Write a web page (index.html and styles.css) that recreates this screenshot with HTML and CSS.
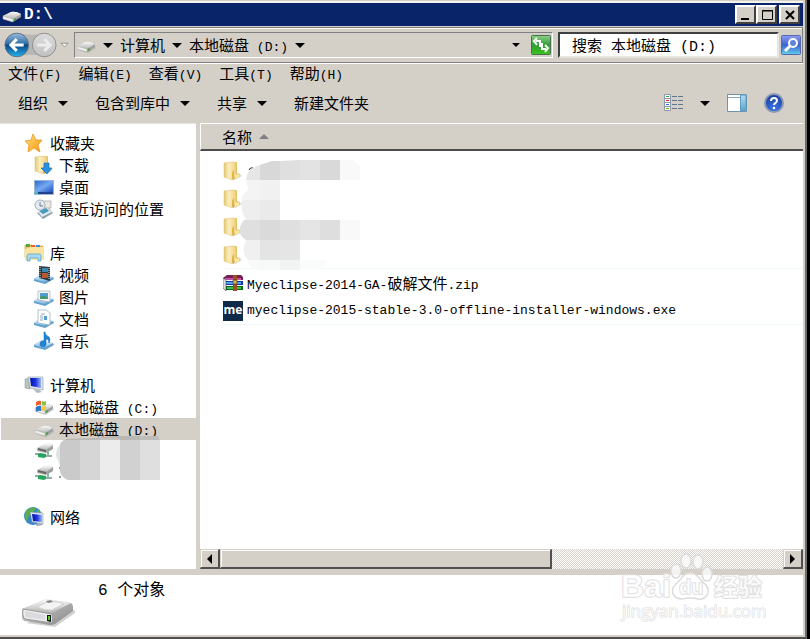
FILE: index.html
```html
<!DOCTYPE html>
<html lang="zh-CN">
<head>
<meta charset="utf-8">
<title>D:\</title>
<link rel="stylesheet" href="styles.css">
</head>
<body>
<svg class="sprite" width="0" height="0" aria-hidden="true">
  <defs>
    <linearGradient id="gMetal" x1="0" y1="0" x2="0" y2="1"><stop offset="0" stop-color="#fafafa"/><stop offset="1" stop-color="#b4b4b4"/></linearGradient>
    <linearGradient id="gSide" x1="0" y1="0" x2="1" y2="1"><stop offset="0" stop-color="#d8d8d8"/><stop offset="1" stop-color="#858585"/></linearGradient>
    <linearGradient id="gFolder" x1="0" y1="0" x2="1" y2="0"><stop offset="0" stop-color="#e3c878"/><stop offset=".4" stop-color="#fbeebc"/><stop offset="1" stop-color="#efd27c"/></linearGradient>
    <linearGradient id="gFlap" x1="0" y1="0" x2="1" y2="0"><stop offset="0" stop-color="#d9ac3c"/><stop offset="1" stop-color="#f3d880"/></linearGradient>
    <linearGradient id="gScreen" x1="0" y1="0" x2="1" y2="1"><stop offset="0" stop-color="#2e6ad0"/><stop offset=".5" stop-color="#74a8f0"/><stop offset="1" stop-color="#1f50bc"/></linearGradient>
    <linearGradient id="gMonitor" x1="0" y1="0" x2="1" y2="0"><stop offset="0" stop-color="#0412a8"/><stop offset=".5" stop-color="#1c34e0"/><stop offset="1" stop-color="#9cb4f8"/></linearGradient>
    <linearGradient id="gBack" x1="0" y1="0" x2="0" y2="1"><stop offset="0" stop-color="#9dbddb"/><stop offset=".45" stop-color="#2e6ea8"/><stop offset=".5" stop-color="#0c4584"/><stop offset="1" stop-color="#22b4f0"/></linearGradient>
    <linearGradient id="gFwd" x1="0" y1="0" x2="0" y2="1"><stop offset="0" stop-color="#dcdcdc"/><stop offset="1" stop-color="#c0c0c0"/></linearGradient>
    <linearGradient id="gGreen" x1="0" y1="0" x2="0" y2="1"><stop offset="0" stop-color="#8fd08a"/><stop offset=".5" stop-color="#2f9c35"/><stop offset="1" stop-color="#3cc41c"/></linearGradient>
    <linearGradient id="gFind" x1="0" y1="0" x2="0" y2="1"><stop offset="0" stop-color="#8e9cf0"/><stop offset=".5" stop-color="#3d62d0"/><stop offset="1" stop-color="#60d0f0"/></linearGradient>
    <radialGradient id="gHelp" cx=".5" cy=".8" r=".8"><stop offset="0" stop-color="#3c78e8"/><stop offset="1" stop-color="#183a9c"/></radialGradient>
    <linearGradient id="gStar" x1="0" y1="0" x2="1" y2="1"><stop offset="0" stop-color="#ffe878"/><stop offset="1" stop-color="#f89010"/></linearGradient>
    <linearGradient id="gTray" x1="0" y1="0" x2="0" y2="1"><stop offset="0" stop-color="#e8f6ff"/><stop offset="1" stop-color="#78b4e0"/></linearGradient>
    <linearGradient id="gPane" x1="0" y1="0" x2="0" y2="1"><stop offset="0" stop-color="#b4dcee"/><stop offset="1" stop-color="#5ca4cc"/></linearGradient>
  </defs>
  <symbol id="drive" viewBox="0 0 20 20">
    <path d="M2 15l10 3 8-5v-1l-8 4z" fill="#000" opacity=".15"/>
    <path d="M1 11L9 7q5-1 10 2v3l-8 5-10-3z" fill="url(#gSide)"/>
    <path d="M1 11L9 7q5-1 10 2l-8 5z" fill="url(#gMetal)"/>
    <path d="M1 11l10 3v3L1 14z" fill="#eee" stroke="#aaa" stroke-width=".5"/>
    <path d="M12 14v2l2-1v-2z" fill="#3aa436"/>
  </symbol>
  <symbol id="windrive" viewBox="0 0 20 20">
    <use href="#drive"/>
    <path d="M2 5q3-2 5-1v4q-2-1-5 1z" fill="#e8602c"/><path d="M8 4q2 1 4 0v4q-2 1-4 0z" fill="#8cc03c"/>
    <path d="M2 10q3-2 5-1v5q-2-1-5 1z" fill="#2c78c8"/><path d="M8 9q2 1 4 0v4q-2 1-4 0z" fill="#f8c830"/>
  </symbol>
  <symbol id="netdrive" viewBox="0 0 20 20">
    <path d="M3 7l8-4q5-1 8 1v4l-7 4-9-2z" fill="url(#gSide)"/>
    <path d="M3 7l8-4q5-1 8 1l-7 5z" fill="url(#gMetal)"/>
    <path d="M4 7l8 2v2L4 9z" fill="#666"/>
    <path d="M1 13h4l8 2h5" fill="none" stroke="#9aa" stroke-width="2"/>
    <path d="M4 13l2-1 6 1v3l-2 1-6-1z" fill="#21a65c"/><path d="M14 10v4" stroke="#8b9" stroke-width="2"/>
  </symbol>
  <symbol id="bigdrive" viewBox="0 0 56 30">
    <path d="M6 25l29 4 20-14v-3z" fill="#000" opacity=".18"/>
    <path d="M2 11L24 2q3-1 8 0l19 3q2 1 2 4v4L35 26q-2 1-5 1L5 23q-3-1-3-4z" fill="url(#gSide)"/>
    <path d="M2 11L24 2q3-1 8 0l19 3-19 10z" fill="url(#gMetal)"/>
    <path d="M17 9l10-5q5-1 11 0l6 2-12 6q-7 1-15-3z" fill="#f4f4f4" stroke="#d0d0d0"/>
    <path d="M26 3l5-1 2 2-5 1z" fill="#888"/>
    <path d="M3 11l29 5q1 5 0 9L5 21q-3-2-2-10z" fill="#ededed" stroke="#999"/>
    <path d="M5 13l20 4v5L5 19z" fill="#dcdce0"/>
    <path d="M27 17h4v7l-4-1z" fill="#111"/><path d="M28 18h2v4h-2z" fill="#5c2"/>
  </symbol>
  <symbol id="star" viewBox="0 0 20 20"><path d="M9 1l3 6h6l-4 5 2 7-6-4-6 4 1-7-4-4 6-1z" fill="url(#gStar)" stroke="#e89820" stroke-width=".8"/></symbol>
  <symbol id="folder" viewBox="0 0 20 20">
    <path d="M10 17l6-5 3 3-7 4z" fill="#000" opacity=".15"/>
    <path d="M10 2l4-1v11l3 2v2l-7 2z" fill="url(#gFlap)"/>
    <path d="M1 2l9-1 3 1v12l-3 5-9-3z" fill="url(#gFolder)" stroke="#dcbc6a" stroke-width=".5"/>
    <path d="M9 14q0-4 2-5v10l-2-1z" fill="#dfb548"/>
    <path d="M12 13l4 1v2l-4 2z" fill="#fbe9a0"/>
  </symbol>
  <symbol id="download" viewBox="0 0 20 20"><use href="#folder"/><path d="M10 8h5v5h3l-5 6-6-6h3z" fill="#2890e4" stroke="#1664b4" stroke-width=".6"/></symbol>
  <symbol id="desktop" viewBox="0 0 20 20"><path d="M0 3h20v15H0z" fill="#9bb8dc"/><path d="M1 4h18v11H1z" fill="url(#gScreen)"/><path d="M1 15h18v2H1z" fill="#22418c"/><path d="M1 15h3v2H1z" fill="#3bc4b0"/></symbol>
  <symbol id="recent" viewBox="0 0 20 20">
    <path d="M8 2h9v7H8z" fill="#e8e8e4" stroke="#999" stroke-width=".6"/><path d="M3 14l12-5 4 5-10 6z" fill="#8e9ba4"/><path d="M4 13l10-4 4 4-10 5z" fill="#d8e8f0"/>
    <path d="M5 12l7-3 3 3-6 3z" fill="#4898bc"/><circle cx="6" cy="6" r="5" fill="#e4edf4" stroke="#a0adb8"/><path d="M6 3v4h3" fill="none" stroke="#778"/>
  </symbol>
  <symbol id="tray" viewBox="0 0 20 20"><path d="M0 14l6-4 13 2 1 2-9 5L0 16z" fill="#60a0cc"/><path d="M0 14l6-4 13 2-9 5z" fill="url(#gTray)"/></symbol>
  <symbol id="library" viewBox="0 0 20 20">
    <path d="M1 2h7l1 1h10v12H1z" fill="#e8c666" stroke="#cc9c3c" stroke-width=".6"/><path d="M2 1h4v3H2z" fill="#58a43c"/><path d="M7 2h4v2H7z" fill="#e86038"/><path d="M12 2h4v2h-4z" fill="#3c8ad8"/>
    <path d="M1 6l6-2h13v13H1z" fill="#f9e5a0"/><path d="M3 13q0-2 2-2h10q2 0 2 2v5h-3v-3H6v3H3z" fill="#a8d8f4" stroke="#4d9ecc" stroke-width=".7"/>
  </symbol>
  <symbol id="video" viewBox="0 0 20 20"><use href="#tray"/><path d="M5 1l11 1v14L5 13z" fill="#2c3840"/><path d="M8 3h6v4H8z" fill="#3a88b4"/><path d="M8 8h6v5H8z" fill="#b85830"/><path d="M6 2v11M15 3v11" stroke="#d4dcdc" stroke-dasharray="1 1"/></symbol>
  <symbol id="picture" viewBox="0 0 20 20"><use href="#tray"/><path d="M4 4h12v11L4 13z" fill="#f5f5f5" stroke="#aab" stroke-width=".7"/><path d="M6 6h8v6H6z" fill="#4f9ed4"/><path d="M6 10q4-3 8 1v1H6z" fill="#479868"/></symbol>
  <symbol id="document" viewBox="0 0 20 20"><use href="#tray"/><path d="M4 1h8l4 3v12L4 14z" fill="#fff" stroke="#98a8b8" stroke-width=".7"/><path d="M7 5h4M6 7h3M6 9h3M6 11h3" stroke="#9ab"/><path d="M10 7h3v4h-3z" fill="#539fd0"/></symbol>
  <symbol id="music" viewBox="0 0 20 20"><use href="#tray"/><path d="M11 1q0 3 4 5 2 2 0 6 0-4-3-4v5a3 3 0 1 1-2-3V1z" fill="#2186d8" stroke="#1262aa" stroke-width=".5"/></symbol>
  <symbol id="computer" viewBox="0 0 20 20"><path d="M1 4l5-1v11l-5-1z" fill="#b8c4b8" stroke="#899" stroke-width=".5"/><path d="M4 2h15v13L6 13z" fill="#dfe6ea" stroke="#8b98a4" stroke-width=".6"/><path d="M6 3h11v10L7 11z" fill="url(#gMonitor)"/><path d="M9 14l6 1 3 2-5 1z" fill="#aeb8c0"/></symbol>
  <symbol id="network" viewBox="0 0 20 20"><circle cx="9" cy="9" r="9" fill="#3888c8"/><path d="M2 4q5-5 10-3l-3 5-4 2-2 6q-4-4-1-10zM13 2l4 3-4 1z" fill="#5cb04c"/><path d="M6 5l13 1v11L8 15z" fill="#dae4ee" stroke="#789" stroke-width=".5"/><path d="M8 7l10 1v7L9 14z" fill="url(#gMonitor)"/><path d="M11 17l5-1 3 2-6 1z" fill="#9ab"/></symbol>
  <symbol id="rar" viewBox="0 0 20 16">
    <path d="M0 3l4-3h14l2 2v3H3z" fill="#742052"/><path d="M2 3h16v2H2z" fill="#c050a8"/><path d="M0 6h20v4H2z" fill="#1438a8"/><path d="M3 7h15v2H3z" fill="#4fa4ec"/><path d="M0 11h20v4H3z" fill="#0c641c"/><path d="M4 12h14v2H4z" fill="#38c850"/>
    <path d="M0 3l3 2v11l-3-3z" fill="#ddd" stroke="#333" stroke-width=".5"/><path d="M10 0h4v16h-4z" fill="#9c5020"/><path d="M10 5h4v4h-4z" fill="#d8b050" stroke="#532" stroke-width=".6"/>
  </symbol>
  <symbol id="down" viewBox="0 0 10 5"><path d="M0 0h10L5 5z"/></symbol>
</svg>

<div class="window">
  <header class="titlebar">
    <svg class="icon"><use href="#drive"/></svg>
    <h1>D:\</h1>
    <div class="window-buttons">
      <button type="button" aria-label="最小化"><svg viewBox="0 0 16 14"><path d="M3 10h8v2H3z"/></svg></button>
      <button type="button" aria-label="最大化"><svg viewBox="0 0 16 14"><path d="M3.500 2.500h10v9h-10zM3 3h11" fill="none" stroke="#000"/></svg></button>
      <button type="button" class="close" aria-label="关闭"><svg viewBox="0 0 16 14"><path d="M4 3l8 8M12 3l-8 8" fill="none" stroke="#000" stroke-width="2"/></svg></button>
    </div>
  </header>

  <div class="navbar">
    <div class="history">
      <svg class="travel" viewBox="0 0 56 28" aria-hidden="true">
        <path d="M14 2Q28 5 44 2v24Q28 22 14 26z" fill="#b6b6b4"/>
        <circle cx="13" cy="14" r="12" fill="url(#gBack)" stroke="#5d6f80"/>
        <path d="M20 14H7M13 8l-6 6 6 6" fill="none" stroke="#fff" stroke-width="3"/>
        <circle cx="41" cy="14" r="12" fill="url(#gFwd)" stroke="#8d8d8d"/>
        <path d="M34 14h13M41 8l6 6-6 6" fill="none" stroke="#ececec" stroke-width="3"/>
      </svg>
      <svg class="recent-pages" viewBox="0 0 10 6" aria-hidden="true"><path d="M1 1h8L5 5z" fill="#fff" stroke="#888"/></svg>
    </div>
    <nav class="address" aria-label="地址">
      <svg class="icon"><use href="#drive"/></svg>
      <svg class="arrow"><use href="#down"/></svg>
      <button type="button">计算机</button>
      <svg class="arrow"><use href="#down"/></svg>
      <button type="button"><span>本地磁盘<span class="en"> (D:)</span></span></button>
      <svg class="arrow"><use href="#down"/></svg>
      <button type="button" class="expand" aria-label="以前的位置"><svg class="arrow-small"><use href="#down"/></svg></button>
      <button type="button" class="refresh" aria-label="刷新"><svg viewBox="0 0 20 20"><rect x=".5" y=".5" width="19" height="19" rx="1" fill="url(#gGreen)" stroke="#49704b"/><path d="M9 12V6H5M6 3L3 6l3 4M11 8v6h4M14 17l3-4-3-3" fill="none" stroke="#fff" stroke-width="2"/></svg></button>
    </nav>
    <form class="search">
      <input type="text" aria-label="搜索" value="搜索 本地磁盘 (D:)">
      <button type="button" aria-label="开始搜索"><svg viewBox="0 0 20 20"><rect x=".5" y=".5" width="19" height="19" rx="1" fill="url(#gFind)" stroke="#5868a8"/><path d="M9 11l-5 5" stroke="#fff" stroke-width="3"/><circle cx="12" cy="8" r="4" fill="#5f84dc" stroke="#fff" stroke-width="2"/></svg></button>
    </form>
  </div>

  <nav class="menubar" aria-label="菜单">
    <button type="button"><span>文件<span class="en">(F)</span></span></button>
    <button type="button"><span>编辑<span class="en">(E)</span></span></button>
    <button type="button"><span>查看<span class="en">(V)</span></span></button>
    <button type="button"><span>工具<span class="en">(T)</span></span></button>
    <button type="button"><span>帮助<span class="en">(H)</span></span></button>
  </nav>

  <div class="toolbar">
    <button type="button">组织<svg class="arrow"><use href="#down"/></svg></button>
    <button type="button">包含到库中<svg class="arrow"><use href="#down"/></svg></button>
    <button type="button">共享<svg class="arrow"><use href="#down"/></svg></button>
    <button type="button">新建文件夹</button>
    <div class="views">
      <button type="button" aria-label="更改您的视图"><svg class="icon" viewBox="0 0 20 20">
        <path d="M.5 1.500h6v16h-6zM.5 5.500h6M.5 9.500h6M.5 13.500h6" fill="#fff" stroke="#8c99a8"/>
        <path d="M2 3.500h3" stroke="#3a9a4a"/><path d="M2 7.500h3" stroke="#e02020"/><path d="M2 11.500h3" stroke="#3070d0"/><path d="M2 15.500h3" stroke="#7ab020"/>
        <path d="M8 3.500h5M14 3.500h5M8 7.500h5M14 7.500h5M8 11.500h5M14 11.500h5M8 15.500h5M14 15.500h5" stroke="#5f7690"/>
      </svg><svg class="arrow"><use href="#down"/></svg></button>
      <button type="button" aria-label="显示预览窗格"><svg class="icon" viewBox="0 0 20 20"><path d="M.5 1.500h19v17H.5z" fill="#fff" stroke="#6e93b0"/><path d="M1 4.500h12" stroke="#8ba6bc"/><path d="M13.500 2h5.500v16h-5.500z" fill="url(#gPane)" stroke="#5c9cc0"/></svg></button>
      <button type="button" aria-label="获取帮助"><svg class="icon" viewBox="0 0 20 20"><circle cx="10" cy="10" r="9" fill="url(#gHelp)" stroke="#8c98b4" stroke-width="2"/><path d="M7 8q0-3 3-3t3 2.500q0 1.500-1.500 2.500T10 12" fill="none" stroke="#fff" stroke-width="2"/><circle cx="10" cy="15" r="1.300" fill="#fff"/></svg></button>
    </div>
  </div>

  <main class="panes">
    <nav class="sidebar" aria-label="导航窗格">
      <ul>
        <li><a href="#"><svg class="icon"><use href="#star"/></svg>收藏夹</a>
          <ul>
            <li><a href="#"><svg class="icon"><use href="#download"/></svg>下载</a></li>
            <li><a href="#"><svg class="icon"><use href="#desktop"/></svg>桌面</a></li>
            <li><a href="#"><svg class="icon"><use href="#recent"/></svg>最近访问的位置</a></li>
          </ul>
        </li>
        <li><a href="#"><svg class="icon"><use href="#library"/></svg>库</a>
          <ul>
            <li><a href="#"><svg class="icon"><use href="#video"/></svg>视频</a></li>
            <li><a href="#"><svg class="icon"><use href="#picture"/></svg>图片</a></li>
            <li><a href="#"><svg class="icon"><use href="#document"/></svg>文档</a></li>
            <li><a href="#"><svg class="icon"><use href="#music"/></svg>音乐</a></li>
          </ul>
        </li>
        <li><a href="#"><svg class="icon"><use href="#computer"/></svg>计算机</a>
          <ul>
            <li><a href="#"><svg class="icon"><use href="#windrive"/></svg><span>本地磁盘<span class="en"> (C:)</span></span></a></li>
            <li><a href="#" class="selected" aria-current="true"><svg class="icon"><use href="#drive"/></svg><span>本地磁盘<span class="en"> (D:)</span></span></a></li>
            <li class="masked"><a href="#" aria-label="网络驱动器"><svg class="icon"><use href="#netdrive"/></svg></a>
              <svg class="mask" viewBox="0 0 104 44" aria-hidden="true">
                <path d="M4 9v21L0 20q0-8 4-11z" fill="#e0e5e4"/><path d="M3 32h2M3 41h2" stroke="#333"/>
                <path d="M4 8q3-5 8-5h12v41H12q-6-2-8-8z" fill="#cacaca"/><path d="M24 3h20v41H24z" fill="#d6d6d6"/><path d="M44 2h20v42H44z" fill="#ececec"/><path d="M64 0h20v44H64z" fill="#d1d1d1"/><path d="M84 0h18l2 3v41H84z" fill="#dfdfdf"/>
                <path d="M10 3q25 0 50-3h42l2 4H10z" fill="#a9a6a0" opacity=".6"/>
              </svg>
            </li>
            <li><a href="#" aria-label="网络驱动器"><svg class="icon"><use href="#netdrive"/></svg></a></li>
          </ul>
        </li>
        <li><a href="#"><svg class="icon"><use href="#network"/></svg>网络</a></li>
      </ul>
    </nav>

    <section class="files">
      <button type="button" class="column-head">名称<svg class="sort" viewBox="0 0 10 5"><path d="M0 5h10L5 0z" fill="#808080"/></svg></button>
      <ul class="file-list">
        <li><svg class="icon"><use href="#folder"/></svg></li>
        <li><svg class="icon"><use href="#folder"/></svg></li>
        <li><svg class="icon"><use href="#folder"/></svg></li>
        <li class="ruled"><svg class="icon"><use href="#folder"/></svg></li>
        <li><svg class="icon"><use href="#rar"/></svg><span><span class="en">Myeclipse-2014-GA-</span>破解文件<span class="en">.zip</span></span></li>
        <li class="ruled"><span class="me-logo">me</span><span class="en">myeclipse-2015-stable-3.0-offline-installer-windows.exe</span></li>
      </ul>
      <svg class="list-mask" viewBox="0 0 120 112" aria-hidden="true">
        <path d="M9 10q1-3 4-2" fill="none" stroke="#222"/>
        <path d="M6 20q1-12 14-15v15z" fill="#e6e6e6"/><path d="M20 5l12-4h8v19H20z" fill="#d8d8d8"/><path d="M40 1l20-1v20H40z" fill="#dfdfdf"/><path d="M60 0h20v20H60z" fill="#e3e3e3"/><path d="M80 0h20v20H80z" fill="#d9d9d9"/><path d="M100 0h12q7 3 8 8v12h-20z" fill="#f9f9f9"/>
        <path d="M6 20h14v20H2q-1-5 6-10z" fill="#f4f4f4"/><path d="M20 20h20v20H20z" fill="#f1f1f1"/><path d="M2 40h18v20H6Q0 50 2 40z" fill="#eee"/><path d="M20 40h20v20H20z" fill="#eaeaea"/>
        <path d="M4 60h16v20H6Q-6 72 4 60z" fill="#dfdfdf"/><path d="M20 60h20v20H20z" fill="#dadada"/><path d="M40 60h20v20H40z" fill="#dfdfdf"/><path d="M60 60h20v20H60z" fill="#e5e5e5"/><path d="M80 60h20v20H80z" fill="#dedede"/><path d="M100 60h20v20h-20z" fill="#f9f9f9"/>
        <path d="M6 80h14v20H8Q0 92 6 80z" fill="#f0f0f0"/><path d="M20 80h20v20H20z" fill="#e4e4e4"/><path d="M40 80h20v20H40z" fill="#e5e5e5"/>
        <path d="M7 100h13v10q-9 0-13-10z" fill="#f7faf9"/><path d="M20 100h20v10H20z" fill="#f6f9f8"/><path d="M40 100h20v10H40z" fill="#f1f4f3"/><path d="M60 100h28l-7 9H60z" fill="#f9fcfb"/>
      </svg>
      <div class="scrollbar">
        <button type="button" aria-label="向左滚动"><svg viewBox="0 0 5 10"><path d="M5 0v10L0 5z"/></svg></button>
        <div class="track"><div class="thumb"></div></div>
        <button type="button" aria-label="向右滚动"><svg viewBox="0 0 5 10"><path d="M0 0v10l5-5z"/></svg></button>
      </div>
    </section>
  </main>

  <footer class="details">
    <svg class="big-icon"><use href="#bigdrive"/></svg>
    <p>6 个对象</p>
  </footer>
</div>

<svg class="watermark" viewBox="0 0 146 72" aria-hidden="true">
  <g fill="#fff" fill-opacity=".75" stroke="#dcdcdc" stroke-width="1.500">
    <text x="1" y="46" class="wm-big">Bai</text>
    <path d="M70 22q6 0 10 6l6 6q4 6 1 10-3 5-9 4-8-2-16 0-6 0-9-5-2-6 3-10l5-5q3-6 9-6z"/>
    <ellipse cx="56" cy="20" rx="5" ry="7"/><ellipse cx="66" cy="10" rx="5" ry="7"/><ellipse cx="78" cy="11" rx="5" ry="7"/><ellipse cx="87" cy="23" rx="5" ry="7"/>
    <text x="59" y="43" class="wm-du">du</text>
    <text x="94" y="45" class="wm-cjk">经验</text>
    <text x="2" y="66" class="wm-url">jingyan.baidu.com</text>
  </g>
</svg>
</body>
</html>
```
FILE: styles.css
```css
* { box-sizing: border-box; }

:root {
  --face: #d4d0c8;
  --shadow: #808080;
  --dark: #404040;
  --cjk: "Noto Sans CJK SC", sans-serif;
  --mono: "Liberation Mono", "Noto Sans CJK SC", monospace;
}

body {
  position: relative;
  margin: 0;
  padding-right: 3px;
  background: #000;
  color: #000;
  font: 15px/20px var(--cjk);
  overflow: hidden;
}

.sprite { position: absolute; }

button {
  display: flex;
  align-items: center;
  padding: 0;
  border: 0;
  background: none;
  color: inherit;
  font: inherit;
  white-space: nowrap;
}

ul { margin: 0; padding: 0; list-style: none; }
a { color: inherit; text-decoration: none; }
svg { display: block; flex: none; }

.en { font-family: var(--mono); font-size: 13px; line-height: 1; white-space: pre; }
.icon { width: 20px; height: 20px; }
.arrow { width: 10px; height: 5px; }
.arrow-small { width: 8px; height: 4px; }

.window {
  display: flex;
  flex-direction: column;
  height: 100vh;
  padding-top: 1px;
  background: var(--face);
  border-right: 2px solid #6c6c6c;
  border-bottom: 2px solid #505050;
}

/* Title bar */
.titlebar {
  display: flex;
  align-items: center;
  height: 25px;
  margin-right: 2px;
  padding: 0 3px 0 2px;
  border-top: 2px solid #f4f2ee;
  background: #0a246a;
  color: #fff;
}
.titlebar h1 { margin: 0 0 0 2px; font: bold 16px/20px var(--mono); }
.window-buttons { display: flex; margin-left: auto; }
.window-buttons button {
  width: 21px;
  height: 19px;
  justify-content: center;
  background: var(--face);
  border: 2px solid;
  border-color: #fff var(--dark) var(--dark) #fff;
}
.window-buttons svg { width: 16px; height: 14px; }
.window-buttons .close { margin-left: 2px; }

/* Navigation bar */
.navbar {
  display: flex;
  align-items: center;
  gap: 5px;
  height: 36px;
  margin: 1px 2px 0 0;
  padding: 0 1px 0 4px;
  border: 1px solid var(--shadow);
  border-left: 0;
  box-shadow: inset 0 1px #fff, 0 1px #fff;
}
.history { display: flex; align-items: center; gap: 1px; }
.travel { width: 55px; height: 28px; }
.recent-pages { width: 9px; height: 6px; }
.address {
  display: flex;
  flex: 1;
  align-items: center;
  gap: 7px;
  height: 26px;
  padding: 0 1px;
  border: 1px solid;
  border-color: var(--shadow) #fff #fff var(--shadow);
}
.expand { height: 20px; margin-left: auto; margin-right: 4px; }
.refresh svg { width: 20px; height: 20px; }
.search { display: flex; align-items: center; gap: 2px; }
.search input {
  width: 221px;
  height: 26px;
  padding: 0 12px;
  border: 2px solid;
  border-color: var(--dark) #e8e6e0 #e8e6e0 var(--dark);
  background: #fff;
  color: #000;
  font: 15px/20px var(--mono);
}
.search svg { width: 20px; height: 20px; }

/* Menus and commands */
.menubar { display: flex; gap: 17px; padding: 0 8px; }
.toolbar {
  display: flex;
  align-items: center;
  gap: 27px;
  height: 40px;
  padding: 0 21px 0 18px;
}
.toolbar button { gap: 10px; }
.views { display: flex; gap: 17px; margin-left: auto; }
.views button { gap: 16px; }

/* Panes */
.panes { display: flex; flex: 1; min-height: 0; margin-right: 2px; }
.sidebar {
  width: 196px;
  padding: 8px 0 0 1px;
  background: #fff;
  border-top: 1px solid #e8e6e2;
  overflow: hidden;
}
.sidebar > ul > li { margin-bottom: 22px; }
.sidebar a {
  display: flex;
  align-items: center;
  gap: 6px;
  height: 22px;
  padding-left: 23px;
  white-space: nowrap;
}
.sidebar ul ul a { gap: 5px; padding-left: 33px; }
.sidebar .selected { background: var(--face); }
.masked { position: relative; }
.mask { position: absolute; top: -4px; left: 55px; width: 104px; height: 44px; }

.files {
  position: relative;
  display: flex;
  flex: 1;
  flex-direction: column;
  min-width: 0;
  margin-left: 4px;
  background: #fff;
}
.column-head {
  gap: 7px;
  height: 28px;
  padding-left: 21px;
  border: solid;
  border-width: 1px 0 2px 1px;
  border-color: #fff #fff #4c4c4c;
  background: var(--face);
}
.sort { width: 10px; height: 5px; }
.file-list { flex: 1; padding: 6px 0 0 23px; }
.file-list li {
  display: flex;
  align-items: center;
  gap: 4px;
  height: 28px;
  white-space: nowrap;
}
.file-list .ruled { border-bottom: 1px solid #eff7fb; }
.me-logo {
  width: 20px;
  height: 20px;
  background: #102a4c;
  color: #fff;
  font: bold 12px/17px "Open Sans", sans-serif;
  text-align: center;
}
.list-mask { position: absolute; top: 37px; left: 40px; width: 120px; height: 112px; }

.scrollbar { display: flex; height: 20px; }
.scrollbar button {
  width: 20px;
  justify-content: center;
}
.scrollbar svg { width: 5px; height: 10px; }
.scrollbar button, .thumb {
  background: var(--face);
  border: solid;
  border-width: 1px 2px 2px 1px;
  border-color: var(--face) #505050 #505050 var(--face);
  box-shadow: inset 1px 1px #fff;
}
.track {
  flex: 1;
  background: repeating-conic-gradient(#fff 0 25%, #d4d0c8 0 50%) 0 0 / 2px 2px;
}
.thumb { width: 59%; height: 20px; }

/* Details */
.details {
  display: flex;
  gap: 22px;
  height: 60px;
  margin: 6px 2px 2px 0;
  padding: 5px 20px;
  background: #fff;
  font: 16px/22px var(--mono);
}
.details p { margin: 0; }
.big-icon { width: 56px; height: 30px; margin-top: 18px; }

.watermark {
  position: absolute;
  right: 44px;
  bottom: 16px;
  width: 146px;
  height: 72px;
}
.watermark text { paint-order: stroke; }
.wm-big { font: bold 32px "Liberation Sans", sans-serif; }
.wm-du { font: bold 20px "Liberation Sans", sans-serif; }
.wm-cjk { font: bold 24px "Noto Sans CJK SC", sans-serif; }
.wm-url { font: 17px "Open Sans", sans-serif; stroke-width: 1px; }
```
